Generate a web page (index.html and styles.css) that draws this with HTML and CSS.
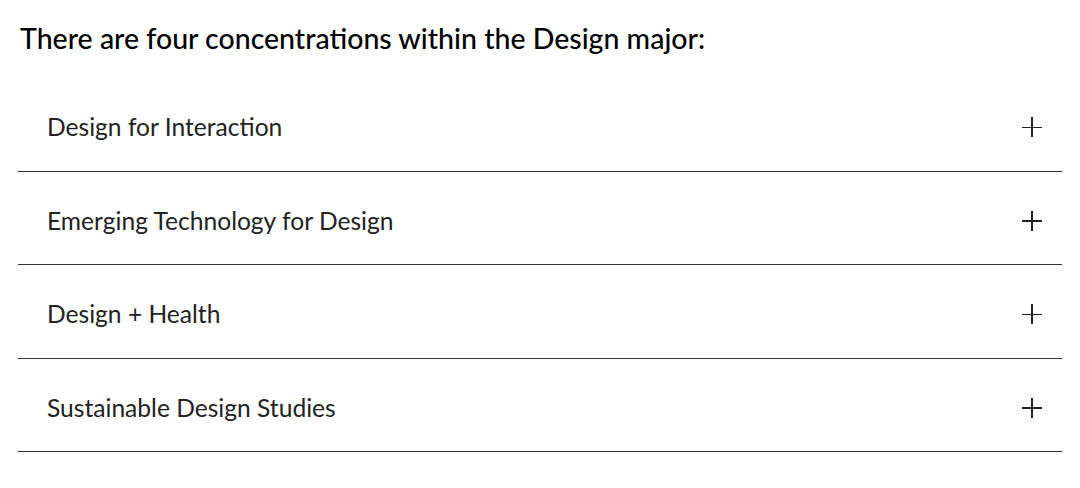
FILE: index.html
```html
<!DOCTYPE html>
<html lang="en">
<head>
<meta charset="utf-8">
<title>Design concentrations</title>
<link rel="stylesheet" href="styles.css">
</head>
<body>
<main class="page">
  <h2 class="title">There are four concentrations within the Design major:</h2>
  <ul class="accordion">
    <li class="item"><span class="label">Design for Interaction</span><span class="plus" aria-hidden="true"></span></li>
    <li class="item"><span class="label">Emerging Technology for Design</span><span class="plus" aria-hidden="true"></span></li>
    <li class="item"><span class="label">Design + Health</span><span class="plus" aria-hidden="true"></span></li>
    <li class="item"><span class="label">Sustainable Design Studies</span><span class="plus" aria-hidden="true"></span></li>
  </ul>
</main>
</body>
</html>
```

FILE: styles.css
```css
html, body {
  margin: 0;
  padding: 0;
  background: #ffffff;
}
.page {
  padding: 18px 18px 0 18px;
  font-family: Lato, "Open Sans", sans-serif;
  color: #000;
}
.title {
  margin: 0 0 0 2px;
  font-size: 28.5px;
  line-height: 40px;
  font-weight: 500;
  color: #000;
}
.accordion {
  list-style: none;
  margin: 20px 0 0 0;
  padding: 0;
  width: 1044px;
}
.item {
  display: flex;
  align-items: center;
  justify-content: space-between;
  height: 92.5px;
  padding: 0 20px 0 29px;
  border-bottom: 1px solid #333;
  box-sizing: content-box;
}
.label {
  font-size: 24.6px;
  color: #222;
  padding-top: 5px;
}
.plus {
  position: relative;
  width: 20px;
  height: 20px;
  margin-top: 6px;
}
.plus::before, .plus::after {
  content: "";
  position: absolute;
  background: #222;
}
.plus::before {
  left: 0;
  top: 9.25px;
  width: 20px;
  height: 1.5px;
}
.plus::after {
  top: 0;
  left: 9.25px;
  width: 1.5px;
  height: 20px;
}
```
